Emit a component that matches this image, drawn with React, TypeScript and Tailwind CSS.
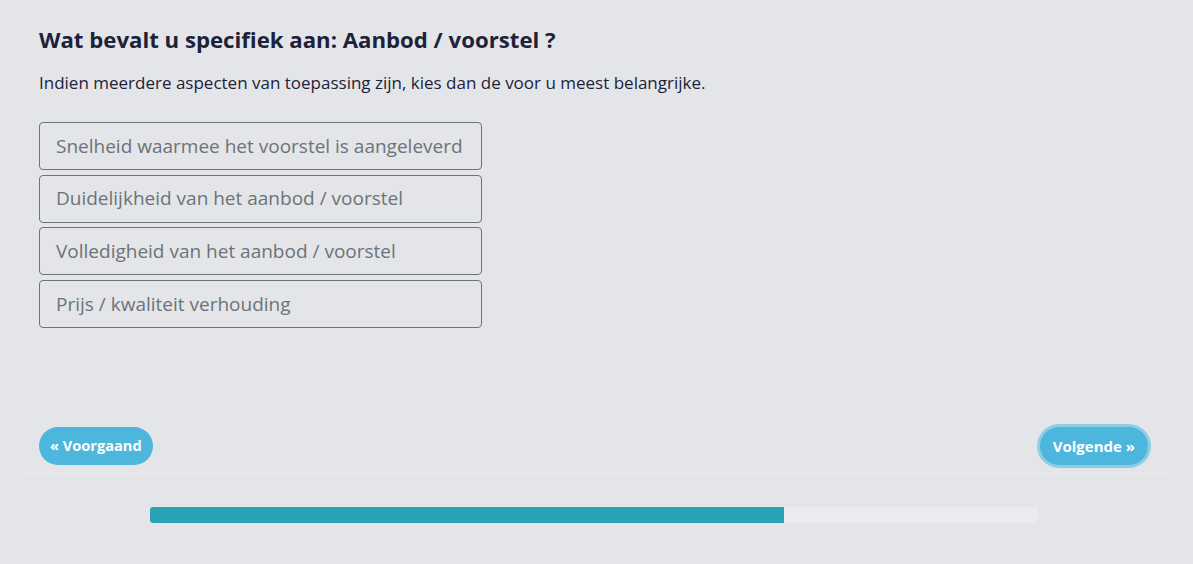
const options = [
  "Snelheid waarmee het voorstel is aangeleverd",
  "Duidelijkheid van het aanbod / voorstel",
  "Volledigheid van het aanbod / voorstel",
  "Prijs / kwaliteit verhouding",
];

export default function App() {
  const progress = 71.4;

  return (
    <div className="min-h-[564px] w-full bg-[#e4e5e8] font-['Open_Sans',sans-serif] text-[#1c2238]">
      <div className="mx-[24px]">
        {/* Question */}
        <div className="px-[15px] pt-[26px]">
          <h2 className="text-[22.2px] font-bold leading-[28px]">
            Wat bevalt u specifiek aan: Aanbod / voorstel ?
          </h2>
          <p className="mt-[17px] text-[17px] leading-[24px]">
            Indien meerdere aspecten van toepassing zijn, kies dan de voor u meest belangrijke.
          </p>

          <div className="mt-[27px] flex w-[443px] flex-col gap-[4.7px]">
            {options.map((opt) => (
              <button
                key={opt}
                type="button"
                className="h-[48px] rounded-[4px] border border-[#6e7279] px-[16px] text-left text-[19px] text-[#6c737a]"
              >
                {opt}
              </button>
            ))}
          </div>

          {/* Navigation */}
          <div className="mt-[99px] flex items-center justify-between pb-[8px]">
            <button
              type="button"
              className="h-[38px] rounded-full bg-[#4cb6dc] px-[11px] text-[14.6px] font-bold text-white"
            >
              « Voorgaand
            </button>
            <button
              type="button"
              className="mr-[6px] h-[38px] rounded-full bg-[#4cb6dc] px-[13px] text-[15px] font-bold text-white ring-[3px] ring-[#8fcde4]"
            >
              Volgende »
            </button>
          </div>
        </div>

        <div className="h-px bg-[#ebecee]" />

        {/* Progress */}
        <div className="pl-[126px] pr-[131px] pt-[33px]">
          <div className="h-[16px] w-full overflow-hidden rounded-[3px] bg-[#e9ebee]">
            <div className="h-full bg-[#29a2b6]" style={{ width: `${progress}%` }} />
          </div>
        </div>
      </div>
    </div>
  );
}
